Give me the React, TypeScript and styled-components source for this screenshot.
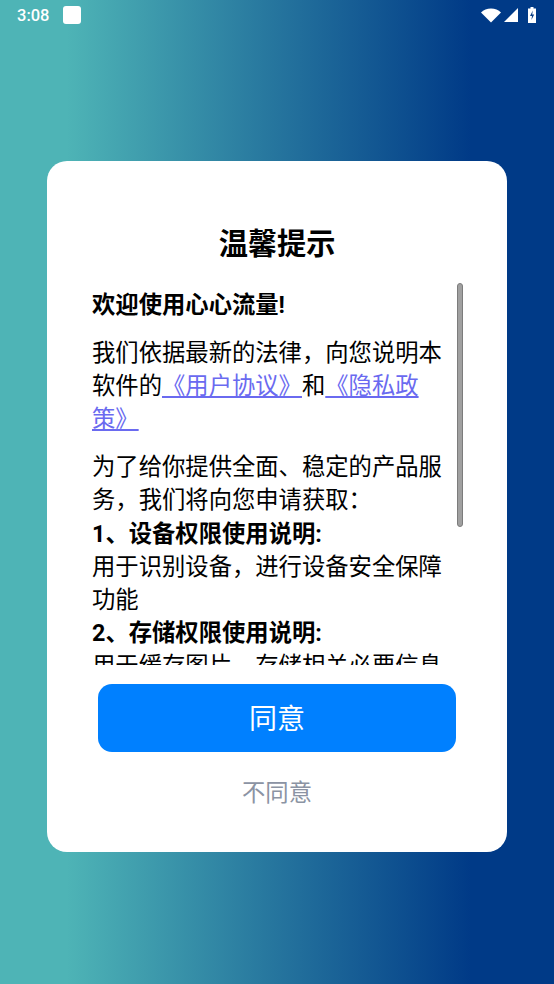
import { type FC } from "react";
import styled, { createGlobalStyle } from "styled-components";

const GlobalStyle = createGlobalStyle`
  html, body {
    margin: 0;
    padding: 0;
    height: 100%;
  }

  body {
    font-family: Roboto, "Noto Sans CJK SC", sans-serif;
  }
`;

const Screen = styled.div`
  display: flex;
  flex-direction: column;
  width: 554px;
  height: 984px;
  overflow: hidden;
  background: linear-gradient(90deg, #4eb4b6 0%, #4eb4b6 12%, #003a87 85%, #003a87 100%);
`;

const StatusBar = styled.div`
  display: flex;
  align-items: center;
  justify-content: space-between;
  height: 30px;
  padding: 0 18px 0 17px;
  color: #fff;
`;

const StatusLeft = styled.div`
  display: flex;
  align-items: center;
  gap: 14px;
`;

const Clock = styled.span`
  font-size: 16.5px;
  font-weight: 500;
`;

const NotifyIcon = styled.div`
  width: 18px;
  height: 18px;
  border-radius: 3px;
  background: #fff;
`;

const StatusRight = styled.div`
  display: flex;
  align-items: center;
  gap: 3px;
`;

const Main = styled.div`
  display: flex;
  justify-content: center;
  padding-top: 131px;
`;

const Card = styled.div`
  position: relative;
  display: flex;
  flex-direction: column;
  box-sizing: border-box;
  width: 460px;
  height: 691px;
  padding-top: 64px;
  border-radius: 20px;
  background: #fff;
`;

const Title = styled.h1`
  margin: 0;
  height: 38px;
  font-size: 29.2px;
  font-weight: 700;
  line-height: 38px;
  text-align: center;
  color: #000;
`;

const ScrollArea = styled.div`
  box-sizing: border-box;
  height: 382px;
  margin-top: 20px;
  padding: 6px 64px 0 45px;
  overflow: hidden;
  font-size: 23.33px;
  line-height: 33.1px;
  color: #000;
`;

const Paragraph = styled.p`
  margin: 0 0 15px;
`;

const Strong = styled.span`
  font-weight: 700;
`;

const Link = styled.a`
  color: #6a6af0;
  text-decoration: underline;
`;

const ScrollThumb = styled.div`
  position: absolute;
  top: 122px;
  right: 44px;
  box-sizing: border-box;
  width: 6px;
  height: 244px;
  border: 1px solid #7c7c7c;
  border-radius: 3px;
  background: #a0a0a0;
`;

const Actions = styled.div`
  display: flex;
  flex-direction: column;
  align-items: center;
  margin-top: 19px;
`;

const AgreeButton = styled.button`
  width: 358px;
  height: 68px;
  padding: 0 0 2px;
  border: none;
  border-radius: 14px;
  background: #0080ff;
  font-family: inherit;
  font-size: 28px;
  color: #fff;
`;

const DeclineButton = styled.button`
  margin-top: 23px;
  padding: 0;
  border: none;
  background: none;
  font-family: inherit;
  font-size: 23.33px;
  line-height: 36px;
  color: #8b93a3;
`;

const WifiIcon: FC = () => (
  <svg width="20" height="15" viewBox="0 0 20 15">
    <path d="M0 4.5C2.6 1.8 6 .5 10 .5s7.4 1.3 10 4L10 14.5z" fill="#fff" />
  </svg>
);

const SignalIcon: FC = () => (
  <svg width="14" height="14" viewBox="0 0 14 14">
    <path d="M0 14L14 0v14z" fill="#fff" />
  </svg>
);

const BatteryIcon: FC = () => (
  <svg width="8" height="16" viewBox="0 0 8 16" style={{ marginLeft: 7 }}>
    <path d="M2.5 0h3v1.5H8V16H0V1.5h2.5z" fill="#fff" />
    <path d="M4.8 3.5L2 9h2l-.6 4 2.8-5.5h-2z" fill="#0a3f86" />
  </svg>
);

export default function App() {
  return (
    <Screen>
      <GlobalStyle />
      <StatusBar>
        <StatusLeft>
          <Clock>3:08</Clock>
          <NotifyIcon />
        </StatusLeft>
        <StatusRight>
          <WifiIcon />
          <SignalIcon />
          <BatteryIcon />
        </StatusRight>
      </StatusBar>
      <Main>
        <Card>
          <Title>温馨提示</Title>
          <ScrollArea>
            <Paragraph>
              <Strong>欢迎使用心心流量!</Strong>
            </Paragraph>
            <Paragraph>
              我们依据最新的法律&#xFF0C;向您说明本软件的
              <Link>《用户协议》</Link>和<Link>《隐私政策》</Link>
            </Paragraph>
            <Paragraph>
              为了给你提供全面、稳定的产品服务&#xFF0C;我们将向您申请获取&#xFF1A;
              <br />
              <Strong>1、设备权限使用说明:</Strong>
              <br />
              用于识别设备&#xFF0C;进行设备安全保障功能
              <br />
              <Strong>2、存储权限使用说明:</Strong>
              <br />
              用于缓存图片&#xFF0C;存储相关必要信息
            </Paragraph>
          </ScrollArea>
          <ScrollThumb />
          <Actions>
            <AgreeButton>同意</AgreeButton>
            <DeclineButton>不同意</DeclineButton>
          </Actions>
        </Card>
      </Main>
    </Screen>
  );
}
